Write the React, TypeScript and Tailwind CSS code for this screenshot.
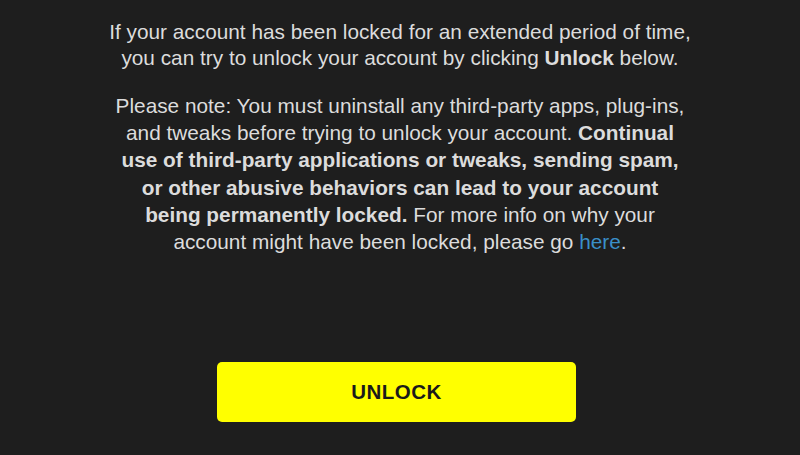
import React from "react";

function App() {
  return (
    <div className="w-[800px] h-[455px] bg-[#1e1e1e] flex flex-col items-center overflow-hidden font-['Liberation_Sans',Arial,sans-serif] text-[#dcdcdc]">
      <div className="flex flex-col items-center text-center text-[20.8px] font-light pt-[19px]">
        <p className="leading-[26px] whitespace-nowrap">
          If your account has been locked for an extended period of time,
          <br />
          you can try to unlock your account by clicking{" "}
          <b className="font-bold">Unlock</b> below.
        </p>
        <p className="leading-[27.2px] mt-[21px] whitespace-nowrap">
          Please note: You must uninstall any third-party apps, plug-ins,
          <br />
          and tweaks before trying to unlock your account.{" "}
          <b className="font-bold">Continual</b>
          <br />
          <b className="font-bold">
            use of third-party applications or tweaks, sending spam,
          </b>
          <br />
          <b className="font-bold">
            or other abusive behaviors can lead to your account
          </b>
          <br />
          <b className="font-bold">being permanently locked.</b> For more info
          on why your
          <br />
          account might have been locked, please go{" "}
          <a className="text-[#3a8fc8]">here</a>.
        </p>
      </div>
      <button className="mt-[107px] mr-[7px] w-[359px] h-[60px] bg-[#ffff00] rounded-[5px] text-[#1a1a1a] font-bold text-[20.5px] tracking-[0.5px]">
        UNLOCK
      </button>
    </div>
  );
}

export default App;
